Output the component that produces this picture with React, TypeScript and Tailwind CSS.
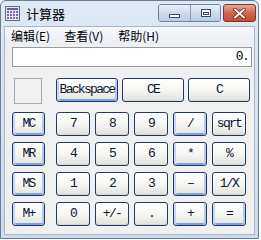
import React from "react";

const mono = { fontFamily: '"Liberation Mono", "DejaVu Sans Mono", monospace' };

function Btn({ label, w, blue }: { label: string; w: string; blue?: boolean }) {
  return (
    <div
      className={`${w} h-[24px] rounded-[3px] border border-[#1f3b63] flex items-center justify-center text-[13px] tracking-[-1.7px] text-[#0b1630] bg-gradient-to-b from-[#ffffff] via-[#f6f6f3] to-[#e2e2dc] ${
        blue
          ? "shadow-[inset_0_1px_0_#ffffff,inset_2px_0_0_#c7d6f6,inset_-2px_0_0_#b3c7f2,inset_0_-2px_0_#7f9ee4]"
          : "shadow-[inset_0_1px_0_#ffffff,inset_0_-1px_0_#d4d4cc]"
      }`}
      style={mono}
    >
      {label}
    </div>
  );
}

export default function App() {
  const rows: { m: string; keys: [string, boolean][] }[] = [
    { m: "MC", keys: [["7", false], ["8", false], ["9", false], ["/", true], ["sqrt", false]] },
    { m: "MR", keys: [["4", false], ["5", false], ["6", false], ["*", true], ["%", false]] },
    { m: "MS", keys: [["1", false], ["2", false], ["3", false], ["–", true], ["1/X", false]] },
    { m: "M+", keys: [["0", false], ["+/-", false], [".", false], ["+", true], ["=", true]] },
  ];
  return (
    <div className="w-[261px] h-[240px] bg-white">
      <div className="w-[259px] h-[239px] rounded-t-[6px] border border-[#6b7d93] bg-gradient-to-b from-[#dfe9f6] to-[#cddbec] flex flex-col">
        {/* Title bar */}
        <div className="h-[25px] flex items-start pl-[4px] pr-[2px] pt-[3px]">
          <svg width="15" height="15" viewBox="0 0 15 15" className="mt-[2px]">
            <rect x="0.5" y="0.5" width="14" height="14" fill="#e8e8ee" stroke="#6a6a80" />
            <rect x="2" y="2" width="11" height="2" fill="#6a5aa8" />
            {[5, 8, 11].map((y) =>
              [2, 5, 8, 11].map((x) => (
                <rect key={`${x}-${y}`} x={x} y={y} width="2" height="2" fill="#7a6ab8" />
              ))
            )}
          </svg>
          <div
            className="ml-[6px] mt-[2px] text-[13px] leading-[16px] text-black"
            style={{ fontFamily: '"Noto Sans CJK SC", sans-serif' }}
          >
            计算器
          </div>
          <div className="ml-auto flex items-start">
            <div className="flex h-[18px] rounded-[3px] border border-[#6f819b] overflow-hidden">
              <div className="w-[32px] h-full bg-gradient-to-b from-[#e9f0f8] via-[#cfdbea] to-[#b9cbe2] flex items-center justify-center border-r border-[#8a9bb3]">
                <div className="w-[11px] h-[4px] mt-[5px] bg-white border border-[#3a4a62]" />
              </div>
              <div className="w-[29px] h-full bg-gradient-to-b from-[#e9f0f8] via-[#cfdbea] to-[#b9cbe2] flex items-center justify-center">
                <div className="w-[10px] h-[8px] border-[1px] border-[#3a4a62] bg-white flex items-center justify-center">
                  <div className="w-[6px] h-[3px] border border-[#3a4a62]" />
                </div>
              </div>
            </div>
            <div className="ml-[2px] w-[33px] h-[18px] rounded-[3px] border border-[#7a3b2e] bg-gradient-to-b from-[#eaa99b] via-[#d0654d] to-[#c84b31] flex items-center justify-center">
              <svg width="13" height="11" viewBox="0 0 13 11">
                <path d="M2 1.5 L11 9.5 M11 1.5 L2 9.5" stroke="#5a2218" strokeWidth="3.6" strokeLinecap="round" />
                <path d="M2 1.5 L11 9.5 M11 1.5 L2 9.5" stroke="#ffffff" strokeWidth="2" strokeLinecap="round" />
              </svg>
            </div>
          </div>
        </div>
        {/* Client */}
        <div className="flex-1 mx-[3px] mb-[3px] border border-[#a7b6ca] bg-[#f0f0f0] flex flex-col">
          <div
            className="h-[18px] bg-gradient-to-b from-[#f7f9fc] to-[#e9eef5] flex items-center text-[12px] text-black"
            style={{ fontFamily: '"Noto Sans CJK SC", sans-serif' }}
          >
            <span className="ml-[6px]">编辑(E)</span>
            <span className="ml-[14px]">查看(V)</span>
            <span className="ml-[15px]">帮助(H)</span>
          </div>
          <div className="pl-[7px] pr-[4px] pt-[2px]">
            <div
              className="w-[240px] h-[20px] bg-white border border-[#9a9a9a] flex items-center justify-end pr-[3px] text-[13px] tracking-[-1.7px] text-black"
              style={mono}
            >
              0.
            </div>
          </div>
          <div className="flex pl-[9px] mt-[11px]">
            <div className="w-[28px] h-[26px] border border-[#a0a8b8] bg-[#f0f0f0]" />
            <div className="ml-[14px] flex gap-[4px]">
              <Btn label="Backspace" w="w-[62px]" blue />
              <Btn label="CE" w="w-[62px]" />
              <Btn label="C" w="w-[62px]" />
            </div>
          </div>
          <div className="flex flex-col gap-[6px] pl-[7px] mt-[8px]">
            {rows.map((r) => (
              <div key={r.m} className="flex">
                <Btn label={r.m} w="w-[33px]" blue />
                <div className="ml-[11px] flex gap-[5px]">
                  {r.keys.map(([k, b]) => (
                    <Btn key={k} label={k} w="w-[34px]" blue={b} />
                  ))}
                </div>
              </div>
            ))}
          </div>
        </div>
      </div>
    </div>
  );
}
